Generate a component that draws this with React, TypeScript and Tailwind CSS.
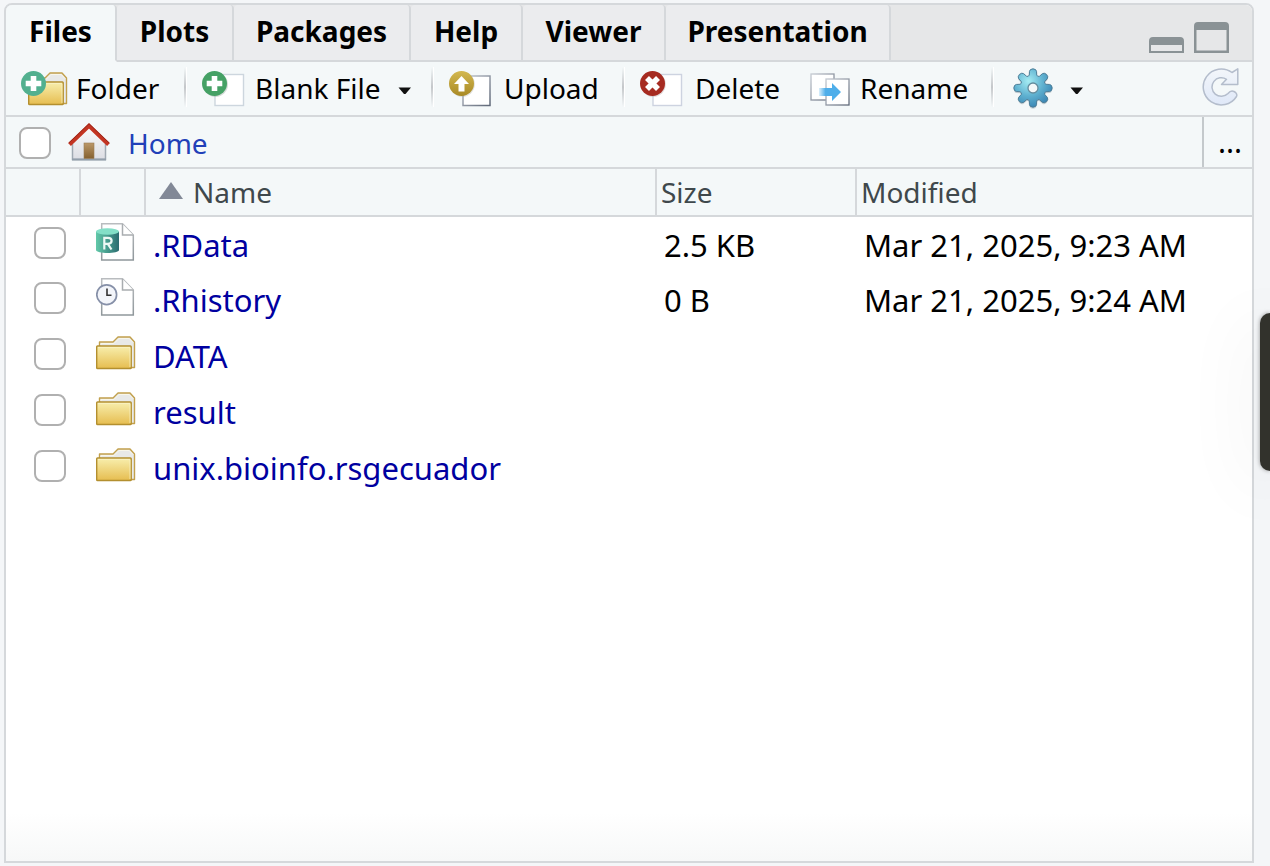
import type { ReactNode } from "react";

type Entry = { name: string; kind: "rdata" | "history" | "folder"; size: string; modified: string };

const entries: Entry[] = [
  { name: ".RData", kind: "rdata", size: "2.5 KB", modified: "Mar 21, 2025, 9:23 AM" },
  { name: ".Rhistory", kind: "history", size: "0 B", modified: "Mar 21, 2025, 9:24 AM" },
  { name: "DATA", kind: "folder", size: "", modified: "" },
  { name: "result", kind: "folder", size: "", modified: "" },
  { name: "unix.bioinfo.rsgecuador", kind: "folder", size: "", modified: "" },
];

const tabs = [
  { label: "Files", width: "w-[111px]" },
  { label: "Plots", width: "w-[117px]" },
  { label: "Packages", width: "w-[177px]" },
  { label: "Help", width: "w-[112px]" },
  { label: "Viewer", width: "w-[143px]" },
  { label: "Presentation", width: "w-[225px]" },
];

function Gradients() {
  return (
    <svg width="0" height="0" className="absolute" aria-hidden="true">
      <defs>
        <linearGradient id="gold" x1="0" y1="0" x2="0" y2="1">
          <stop offset="0" stopColor="#f8efae" />
          <stop offset="1" stopColor="#e6bd50" />
        </linearGradient>
        <linearGradient id="teal" x1="0" y1="0" x2="1" y2="0">
          <stop offset="0" stopColor="#62c9a9" />
          <stop offset="1" stopColor="#2b6c70" />
        </linearGradient>
        <linearGradient id="page" x1="0" y1="0" x2="0" y2="1">
          <stop offset="0" stopColor="#b9bcbf" />
          <stop offset="1" stopColor="#8f979b" />
        </linearGradient>
        <linearGradient id="amber" x1="0" y1="0" x2="0" y2="1">
          <stop offset="0" stopColor="#d3b850" />
          <stop offset="1" stopColor="#a98a26" />
        </linearGradient>
        <linearGradient id="door" x1="0" y1="0" x2="0" y2="1">
          <stop offset="0" stopColor="#bb9768" />
          <stop offset="1" stopColor="#85602f" />
        </linearGradient>
        <linearGradient id="wall" x1="0" y1="0" x2="0" y2="1">
          <stop offset="0" stopColor="#fafafb" />
          <stop offset="1" stopColor="#dcdde3" />
        </linearGradient>
        <linearGradient id="arrow" x1="0" y1="0" x2="1" y2="0">
          <stop offset="0" stopColor="#4eaeea" stopOpacity="0.2" />
          <stop offset="0.3" stopColor="#4eaeea" />
        </linearGradient>
        <linearGradient id="sheet" x1="0" y1="0" x2="1" y2="1">
          <stop offset="0" stopColor="#c5cad2" />
          <stop offset="1" stopColor="#5f6878" />
        </linearGradient>
        <radialGradient id="gear" cx="0.38" cy="0.32" r="0.7">
          <stop offset="0" stopColor="#a5ecf3" />
          <stop offset="0.55" stopColor="#5fb1d0" />
          <stop offset="1" stopColor="#3b86b4" />
        </radialGradient>
        <linearGradient id="reload" x1="0" y1="0" x2="0" y2="1">
          <stop offset="0" stopColor="#f3f6fa" />
          <stop offset="1" stopColor="#dfe8f8" />
        </linearGradient>
      </defs>
    </svg>
  );
}

function FolderShape() {
  return (
    <g strokeLinejoin="round">
      <path d="M3.500 10V6H17L22 1h12l4.500 5v25.500H34z" fill="#e8e9e8" stroke="#c2a04c" strokeWidth="1.400" />
      <path d="M5 9V7.500H18L23 2.500h10l4 4" fill="none" stroke="#f8f6ea" strokeWidth="1" />
      <rect x="0.700" y="10" width="34.500" height="22.500" rx="0.800" fill="url(#gold)" stroke="#b38f2f" strokeWidth="1.400" />
      <path d="M2 11.400H34M34 12V31" stroke="#fbf5cc" strokeWidth="1" opacity="0.700" />
    </g>
  );
}

function FolderIcon() {
  return (
    <svg width="40" height="34" viewBox="0 0 40 34" className="shrink-0" aria-hidden="true">
      <FolderShape />
    </svg>
  );
}

function Plus({ color }: { color: string }) {
  return (
    <>
      <circle cx="12.500" cy="12.500" r="12.500" fill={color} />
      <path d="M9.700 5h5.600v4.700h5v5.600h-5V20H9.700v-4.700h-5V9.700h5z" fill="#fff" />
    </>
  );
}

function NewFolderIcon() {
  return (
    <svg width="47" height="36" viewBox="0 0 47 36" className="shrink-0" aria-hidden="true">
      <g transform="translate(7 1)"><FolderShape /></g>
      <Plus color="#52b08f" />
    </svg>
  );
}

function BlankFileIcon() {
  return (
    <svg width="43" height="36" viewBox="0 0 43 36" className="shrink-0" aria-hidden="true">
      <rect x="13" y="3.500" width="28.500" height="31" fill="#fff" stroke="#cdd6de" strokeWidth="1.400" />
      <circle cx="13.500" cy="13.500" r="12.500" fill="#9aa7a0" opacity="0.400" />
      <Plus color="#45a165" />
    </svg>
  );
}

function UploadIcon() {
  return (
    <svg width="43" height="36" viewBox="0 0 43 36" className="shrink-0" aria-hidden="true">
      <rect x="14" y="5" width="27" height="29.500" fill="#fff" stroke="url(#sheet)" strokeWidth="1.500" />
      <circle cx="13.300" cy="13.300" r="12.500" fill="#9a9a90" opacity="0.300" />
      <circle cx="12.500" cy="12.500" r="12.500" fill="url(#amber)" />
      <path d="M12.500 5l7.500 8h-4.500v7.500h-6V13H5z" fill="#fff" />
    </svg>
  );
}

function DeleteIcon() {
  return (
    <svg width="43" height="36" viewBox="0 0 43 36" className="shrink-0" aria-hidden="true">
      <rect x="13" y="3.500" width="28.500" height="31" fill="#fff" stroke="#cdd3e0" strokeWidth="1.400" />
      <circle cx="13.300" cy="13.300" r="12.500" fill="#9a8080" opacity="0.300" />
      <circle cx="12.500" cy="12.500" r="12.500" fill="#a62b21" />
      <path d="M7 7l11 11M18 7l-11 11" stroke="#fff" strokeWidth="5.600" />
    </svg>
  );
}

function RenameIcon() {
  return (
    <svg width="40" height="36" viewBox="0 0 40 36" className="shrink-0" aria-hidden="true">
      <rect x="1" y="3" width="23" height="26" fill="#fff" stroke="url(#sheet)" strokeWidth="1.300" />
      <rect x="16" y="8" width="23" height="26" fill="#fff" stroke="url(#sheet)" strokeWidth="1.300" />
      <path d="M9 17h13v-5l9 9-9 9v-5H9z" fill="url(#arrow)" />
    </svg>
  );
}

function GearIcon() {
  const points: string[] = [];
  for (let i = 0; i < 8; i++) {
    const base = (i * Math.PI) / 4;
    const at = (offset: number, r: number) =>
      `${(20 + r * Math.sin(base + offset)).toFixed(2)} ${(20 - r * Math.cos(base + offset)).toFixed(2)}`;
    points.push(
      `${i ? "L" : "M"}${at(-0.28, 13.5)}L${at(-0.21, 17)}Q${at(-0.17, 19.2)} ${at(0, 19.2)}Q${at(0.17, 19.2)} ${at(0.21, 17)}L${at(0.28, 13.5)}Q${at(0.39, 11.8)} ${at(0.505, 13.5)}`,
    );
  }
  return (
    <svg width="40" height="42" viewBox="0 0 40 42" className="shrink-0" aria-hidden="true">
      <path d={points.join("") + "Z"} transform="translate(0 1.500)" fill="#7c8b94" opacity="0.350" />
      <path d={points.join("") + "Z"} fill="url(#gear)" stroke="#4c7c96" strokeWidth="1" />
      <circle cx="20" cy="20" r="5" fill="#f4f8f9" stroke="#648c9d" strokeWidth="1.300" />
    </svg>
  );
}

function RefreshIcon() {
  return (
    <svg width="38" height="40" viewBox="0 0 38 40" aria-hidden="true">
      <path
        d="M30 5.500L35.800 1.800V17.500H19.500L24.500 12.300A9.300 9.300 0 1 0 26 26.500C28 24 30 23.500 32 24.500S35.500 27.500 34.500 29.500A18 18 0 1 1 30 5.500z"
        fill="url(#reload)" stroke="#b4bdcc" strokeWidth="1.500" strokeLinejoin="round"
      />
    </svg>
  );
}

function HomeIcon() {
  return (
    <svg width="42" height="38" viewBox="0 0 42 38" aria-hidden="true">
      <path d="M4.500 20L21 4l16.500 16v17h-33z" fill="url(#wall)" />
      <path d="M4.500 21v15.500h33V21" fill="none" stroke="#a0a9b2" strokeWidth="1.500" />
      <path d="M4 36.500h34" stroke="#929eaa" strokeWidth="2" />
      <rect x="16" y="20" width="10" height="15.500" fill="url(#door)" stroke="#9a7c54" strokeWidth="0.600" />
      <path d="M1.500 21.500L21 2.800 40.500 21.500" fill="none" stroke="#c33422" strokeWidth="4" />
      <path d="M0.800 20L21 0.800 41.200 20" fill="none" stroke="#902519" strokeWidth="0.800" />
    </svg>
  );
}

function PageShape() {
  return (
    <>
      <path d="M5.700 0.800H26.500L37.300 12V37H5.700z" fill="#fff" stroke="url(#page)" strokeWidth="1.500" />
      <path d="M26.500 1v11h10.800" fill="#fff" stroke="#a9adb0" strokeWidth="1.500" />
    </>
  );
}

function RDataIcon() {
  return (
    <svg width="40" height="38" viewBox="0 0 40 38" aria-hidden="true">
      <PageShape />
      <path d="M0 8.500V27c0 4 23 4 23 0V8.500z" fill="url(#teal)" />
      <ellipse cx="11.500" cy="8.500" rx="11.500" ry="3.300" fill="#83dfc7" />
      <path d="M8.300 26.500V14.800h3.700c4.800 0 4.800 6 0 6H8.500M11.800 20.800l3.700 5.700" fill="none" stroke="#edf8f4" strokeWidth="2.200" />
    </svg>
  );
}

function HistoryIcon() {
  return (
    <svg width="40" height="38" viewBox="0 0 40 38" aria-hidden="true">
      <PageShape />
      <circle cx="10.700" cy="16.700" r="9.900" fill="#f3f5fa" stroke="#8690a8" strokeWidth="1.700" />
      <path d="M11 10.500v6.800h4.500" fill="none" stroke="#333" strokeWidth="1.600" />
    </svg>
  );
}

function Caret() {
  return (
    <svg width="14" height="8" viewBox="0 0 14 8" className="block shrink-0" aria-hidden="true">
      <path d="M0.500 0.500h12.500L7.500 7H6z" fill="#111" />
    </svg>
  );
}

function Separator() {
  return <span className="mb-1 h-10 w-[3px] shrink-0 border-r border-white bg-linear-to-b from-[#f4f8f9] via-[#c4c7ca] to-[#f4f8f9]" />;
}

function Tool({ icon, label, width, gap = "gap-3" }: { icon: ReactNode; label: string; width: string; gap?: string }) {
  return (
    <button type="button" className={`flex shrink-0 items-center whitespace-nowrap ${gap} ${width}`}>
      {icon}
      <span className="pb-0.5">{label}</span>
    </button>
  );
}

function Check({ label }: { label: string }) {
  return (
    <input
      type="checkbox"
      aria-label={label}
      className="block size-8 shrink-0 appearance-none rounded-lg border-2 border-[#b0b0b0] bg-white checked:bg-[#2f6fd0]"
    />
  );
}

export default function App() {
  return (
    <div className="relative flex min-h-screen flex-col overflow-hidden bg-[#f4f6f8] pt-[3px] pr-4 pb-[3px] pl-1 font-['Noto_Sans','Open_Sans',sans-serif] text-[28px] leading-9 text-black">
      <Gradients />
      <main className="flex grow flex-col overflow-hidden rounded-t-lg border-2 border-[#d5d8db] bg-white">
        <header className="flex h-[57px] bg-[#e6e7e8]">
          <div role="tablist" className="flex">
            {tabs.map((tab, i) => (
              <button
                key={tab.label}
                type="button"
                role="tab"
                aria-selected={i === 0}
                className={`${tab.width} shrink-0 rounded-t border-r-2 border-b-2 border-r-[#d5d8db] pb-1 text-[28px] font-bold ${i === 0 ? "border-b-[#f4f8f9] bg-[#f4f8f9]" : "border-b-[#d5d8db] bg-[#ebecee]"}`}
              >
                {tab.label}
              </button>
            ))}
          </div>
          <div className="flex grow items-end justify-end gap-2.5 border-b-2 border-[#d5d8db] pr-[23px] pb-[7px]">
            <button type="button" aria-label="Minimize">
              <svg width="35" height="16" viewBox="0 0 35 16" className="block">
                <path d="M0 16V4q0-4 4-4h27q4 0 4 4v12zM2 8v6h31V8z" fill="#8a9295" fillRule="evenodd" />
              </svg>
            </button>
            <button type="button" aria-label="Maximize">
              <svg width="35" height="31" viewBox="0 0 35 31" className="block">
                <path d="M0 31V4q0-4 4-4h27q4 0 4 4v27zM2.500 8v20.500h30V8z" fill="#8a9295" fillRule="evenodd" />
              </svg>
            </button>
          </div>
        </header>

        <div role="toolbar" className="flex h-[55px] items-center border-b-2 border-[#d5d8db] bg-[#f4f8f9] pr-3 pl-[15px]">
          <Tool icon={<NewFolderIcon />} label="Folder" width="w-[163px]" gap="gap-2" />
          <Separator />
          <button type="button" className="ml-[15px] flex w-[229px] shrink-0 items-center gap-2.5 whitespace-nowrap">
            <BlankFileIcon />
            <span className="pb-0.5">Blank File</span>
            <span className="pt-1 pl-2"><Caret /></span>
          </button>
          <Separator />
          <div className="w-[15px] shrink-0" />
          <Tool icon={<UploadIcon />} label="Upload" width="w-[173px]" />
          <Separator />
          <div className="w-[15px] shrink-0" />
          <Tool icon={<DeleteIcon />} label="Delete" width="w-[170px]" />
          <Tool icon={<RenameIcon />} label="Rename" width="w-[181px]" gap="gap-2.5" />
          <Separator />
          <button type="button" aria-label="More" className="ml-[19px] flex shrink-0 items-center gap-[17px]">
            <GearIcon />
            <span className="pt-1"><Caret /></span>
          </button>
          <button type="button" aria-label="Refresh" className="ml-auto pb-1"><RefreshIcon /></button>
        </div>

        <nav aria-label="Path" className="flex h-[52px] items-center border-b-2 border-[#d5d8db] bg-[#f4f8f9] pl-[13px]">
          <span className="pt-0.5"><Check label="Select all" /></span>
          <a href="#home" className="ml-[17px] flex items-center gap-[18px] text-[#2140b8]">
            <HomeIcon />
            <span className="pt-px">Home</span>
          </a>
          <button type="button" aria-label="Browse" className="ml-auto h-full w-[50px] border-l-2 border-[#c4c9cc] pl-1 text-[30px]">...</button>
        </nav>

        <div className="grow bg-linear-to-t from-[#f7f8f8] to-white to-[48px]">
          <table className="w-full table-fixed border-collapse text-left">
            <colgroup>
              <col className="w-[74px]" />
              <col className="w-[65px]" />
              <col />
              <col className="w-[200px]" />
              <col className="w-[396px]" />
            </colgroup>
            <thead>
              <tr className="h-[47px] border-b-2 border-[#d5d8db] bg-[#f4f8f9] text-[28px] text-[#3f484c]">
                <td className="border-r-2 border-[#d5d8db] p-0" />
                <td className="border-r-2 border-[#d5d8db] p-0" />
                <th className="border-r-2 border-[#d5d8db] p-0 pl-[13px] font-normal">
                  <span className="flex items-center gap-2.5">
                    <svg width="24" height="20" viewBox="0 0 24 20" aria-hidden="true"><path d="M12 0l12 17H0z" fill="#828997" /></svg>
                    Name
                  </span>
                </th>
                <th className="border-r-2 border-[#d5d8db] p-0 pl-1 font-normal">Size</th>
                <th className="p-0 pl-1 font-normal">Modified</th>
              </tr>
            </thead>
            <tbody className="text-[31px]">
              {entries.map((e) => (
                <tr key={e.name} className="h-14">
                  <td className="p-0 pb-1 pl-7"><Check label={`Select ${e.name}`} /></td>
                  <td className="p-0 pb-1.5 pl-4">
                    {e.kind === "rdata" ? <RDataIcon /> : e.kind === "history" ? <HistoryIcon /> : <FolderIcon />}
                  </td>
                  <td className="p-0 pl-2"><a href="#file" className="text-[#0000a0]">{e.name}</a></td>
                  <td className="p-0 pl-2">{e.size}</td>
                  <td className="p-0 pl-2 whitespace-nowrap">{e.modified}</td>
                </tr>
              ))}
            </tbody>
          </table>
        </div>
      </main>
      <div className="absolute top-[313px] right-0 h-[158px] w-2.5 rounded-l-xl bg-[#32322c] shadow-[0_0_4px_rgba(0,0,0,0.4),0_12px_70px_10px_rgba(0,0,0,0.06)]" />
    </div>
  );
}
